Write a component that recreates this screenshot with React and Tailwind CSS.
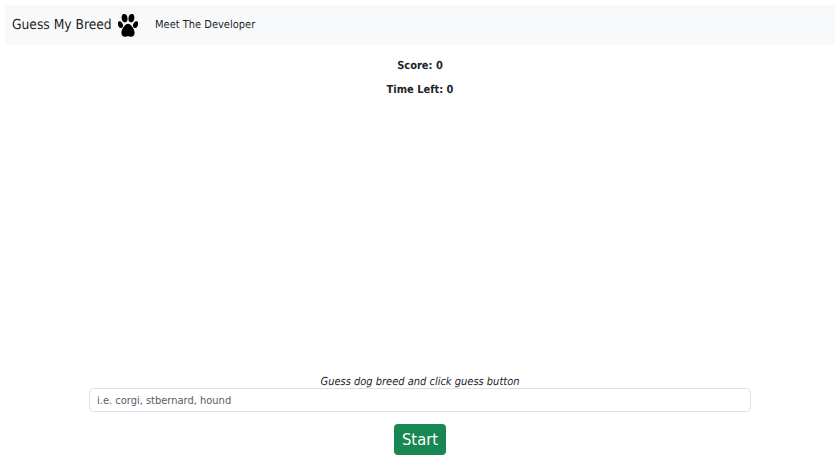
function Paw({ className }) {
  return (
    <svg viewBox="0 0 20 23" className={className} fill="currentColor">
      <ellipse cx="6.6" cy="4.2" rx="2.9" ry="4.2" transform="rotate(-8 6.6 4.2)" />
      <ellipse cx="13.4" cy="4.2" rx="2.9" ry="4.2" transform="rotate(8 13.4 4.2)" />
      <ellipse cx="2.4" cy="10.6" rx="2.4" ry="3.5" transform="rotate(-20 2.4 10.6)" />
      <ellipse cx="17.6" cy="10.6" rx="2.4" ry="3.5" transform="rotate(20 17.6 10.6)" />
      <path d="M10 9.8c2.8 0 6.2 4.8 6.6 8.8.2 2.8-1.6 4.2-3.6 4.2-1.2 0-2-.6-3-.6s-1.8.6-3 .6c-2 0-3.8-1.4-3.6-4.2.4-4 3.8-8.8 6.6-8.8z" />
    </svg>
  );
}

export default function App() {
  return (
    <div className="min-h-[472px] bg-white p-[5px] font-['DejaVu_Sans_Condensed','DejaVu_Sans',sans-serif] text-[#212529] [text-rendering:geometricPrecision]">
      <nav className="flex h-10 items-center bg-[#f8f9fa] pl-[7px]">
        <a className="w-[100px] text-[13.7px] whitespace-nowrap text-black/90">Guess My Breed</a>
        <Paw className="ml-[6px] h-[23px] w-5 text-black" />
        <a className="ml-[17px] text-[11px] whitespace-nowrap text-black/90">Meet The Developer</a>
      </nav>

      <div className="flex flex-col items-center">
        <p className="mt-3 text-[11px] leading-[18px] font-bold">Score: 0</p>
        <p className="mt-[6px] text-[11px] leading-[18px] font-bold">Time Left: 0</p>

        <div className="h-[276px]" />

        <p className="text-[11px] leading-[13px] italic">Guess dog breed and click guess button</p>
        <input
          type="text"
          placeholder="i.e. corgi, stbernard, hound"
          className="h-6 w-[662px] rounded border border-[#dee2e6] bg-white px-[7px] text-[11px] text-[#212529] placeholder-[#595c5f]"
        />
        <button className="mt-3 h-[31px] w-[52px] rounded bg-[#198754] pt-px text-[16.4px] text-white">
          Start
        </button>
      </div>
    </div>
  );
}
